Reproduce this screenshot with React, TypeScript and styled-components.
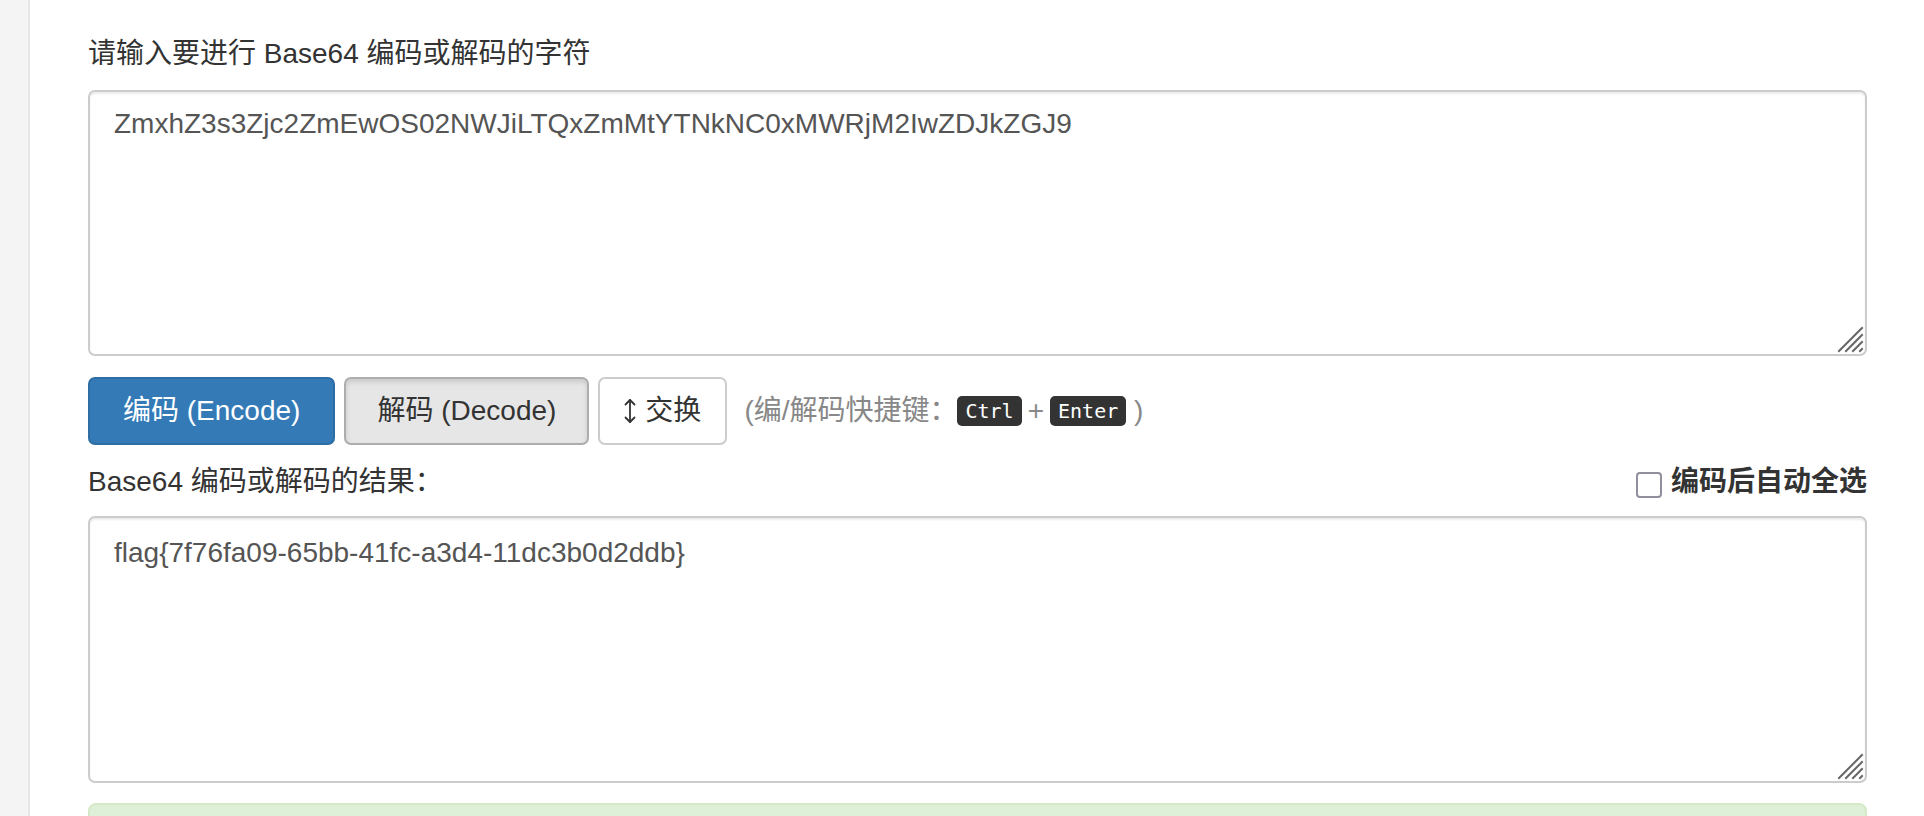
import styled, { createGlobalStyle } from 'styled-components';

const GlobalStyle = createGlobalStyle`
    html, body {
        margin: 0;
        padding: 0;
        background: #fff;
    }
    body {
        font-family: 'Liberation Sans', 'Noto Sans CJK SC', Arial, sans-serif;
        color: #333;
        font-size: 28px;
        line-height: 1.42857;
        overflow: hidden;
    }
`;

const Page = styled.div`
    display: flex;
    min-height: 816px;
`;

const Sidebar = styled.aside`
    width: 28px;
    flex: none;
    background: #f4f4f4;
    border-right: 2px solid #e6e6e6;
`;

const Main = styled.main`
    flex: 1;
    padding: 33px 57px 0 58px;
    display: flex;
    flex-direction: column;
`;

const Heading = styled.label`
    display: block;
    font-size: 28px;
    line-height: 42px;
    margin-bottom: 15px;
`;

const FieldBox = styled.div<{ $h: number }>`
    position: relative;
    height: ${(p) => p.$h}px;
`;

const Area = styled.textarea<{ $pt: number }>`
    box-sizing: border-box;
    display: block;
    width: 100%;
    height: 100%;
    margin: 0;
    padding: ${(p) => p.$pt}px 24px;
    border: 2px solid #ccc;
    border-radius: 7px;
    box-shadow: inset 0 2px 2px rgba(0, 0, 0, 0.075);
    font-family: 'Liberation Sans', 'Noto Sans CJK SC', Arial, sans-serif;
    font-size: 28px;
    line-height: 40px;
    color: #555;
    resize: none;
    outline: none;
`;

const Grip = styled.svg`
    position: absolute;
    right: 3px;
    bottom: 3px;
    pointer-events: none;
`;

const Actions = styled.div`
    display: flex;
    align-items: center;
    gap: 9px;
    margin-top: 21px;
`;

const Btn = styled.button<{ $kind: 'primary' | 'active' | 'plain'; $px: number }>`
    height: 68px;
    box-sizing: border-box;
    padding: 0 ${(p) => p.$px}px;
    display: inline-flex;
    align-items: center;
    gap: 9px;
    border-radius: 7px;
    font-family: 'Liberation Sans', 'Noto Sans CJK SC', Arial, sans-serif;
    font-size: 28px;
    line-height: 40px;
    cursor: pointer;
    border: 2px solid
        ${(p) => (p.$kind === 'primary' ? '#2e6da4' : p.$kind === 'active' ? '#adadad' : '#ccc')};
    background: ${(p) => (p.$kind === 'primary' ? '#337ab7' : p.$kind === 'active' ? '#e6e6e6' : '#fff')};
    color: ${(p) => (p.$kind === 'primary' ? '#fff' : '#333')};
    box-shadow: ${(p) => (p.$kind === 'active' ? 'inset 0 3px 5px rgba(0,0,0,0.125)' : 'none')};
`;

const Hint = styled.span`
    margin-left: 8px;
    color: #888;
    display: inline-flex;
    align-items: center;
    white-space: pre;
`;

const Kbd = styled.kbd`
    display: inline-block;
    padding: 3px 8px;
    font-family: 'DejaVu Sans Mono', 'Liberation Mono', monospace;
    font-size: 20px;
    line-height: 24px;
    color: #fff;
    background: #333;
    border-radius: 5px;
`;

const Plus = styled.span`
    margin: 0 6px;
`;

const ResultRow = styled.div`
    display: flex;
    align-items: center;
    justify-content: space-between;
    margin-top: 16px;
    margin-bottom: 13px;
    height: 42px;
`;

const CheckLabel = styled.label`
    display: flex;
    align-items: center;
    gap: 9px;
    font-weight: bold;
    color: #333;
`;

const Box = styled.span`
    width: 26px;
    height: 26px;
    box-sizing: border-box;
    border: 2px solid #8f8f9d;
    border-radius: 4px;
    background: #fff;
    margin-top: 6px;
`;

const Alert = styled.div`
    margin-top: 20px;
    height: 60px;
    background: #dff0d8;
    border: 2px solid #d6e9c6;
    border-radius: 8px;
`;

function ResizeGrip() {
    return (
        <Grip width="28" height="28" viewBox="0 0 28 28">
            <g stroke="#666" strokeWidth="2" strokeLinecap="square">
                <line x1="26" y1="3" x2="3" y2="26" />
                <line x1="26" y1="10" x2="10" y2="26" />
                <line x1="26" y1="17" x2="17" y2="26" />
                <line x1="26" y1="24" x2="24" y2="26" />
            </g>
        </Grip>
    );
}

function SwapIcon() {
    return (
        <svg width="12" height="26" viewBox="0 0 12 26" aria-hidden="true">
            <g stroke="#333" strokeWidth="1.8" fill="none" strokeLinecap="round" strokeLinejoin="round">
                <line x1="6" y1="2" x2="6" y2="24" />
                <polyline points="1.5,6.5 6,2 10.5,6.5" />
                <polyline points="1.5,19.5 6,24 10.5,19.5" />
            </g>
        </svg>
    );
}

export default function App() {
    return (
        <>
            <GlobalStyle />
            <Page>
                <Sidebar />
                <Main>
                    <Heading>请输入要进行 Base64 编码或解码的字符</Heading>
                    <FieldBox $h={266}>
                        <Area $pt={12} defaultValue="ZmxhZ3s3Zjc2ZmEwOS02NWJiLTQxZmMtYTNkNC0xMWRjM2IwZDJkZGJ9" />
                        <ResizeGrip />
                    </FieldBox>
                    <Actions>
                        <Btn $kind="primary" $px={33}>编码 (Encode)</Btn>
                        <Btn $kind="active" $px={31}>解码 (Decode)</Btn>
                        <Btn $kind="plain" $px={24}>
                            <SwapIcon />
                            交换
                        </Btn>
                        <Hint>
                            (编/解码快捷键：<Kbd>Ctrl</Kbd>
                            <Plus>+</Plus>
                            <Kbd>Enter</Kbd> )
                        </Hint>
                    </Actions>
                    <ResultRow>
                        <span>Base64 编码或解码的结果：</span>
                        <CheckLabel>
                            <Box />
                            编码后自动全选
                        </CheckLabel>
                    </ResultRow>
                    <FieldBox $h={267}>
                        <Area $pt={15} defaultValue="flag{7f76fa09-65bb-41fc-a3d4-11dc3b0d2ddb}" />
                        <ResizeGrip />
                    </FieldBox>
                    <Alert />
                </Main>
            </Page>
        </>
    );
}
